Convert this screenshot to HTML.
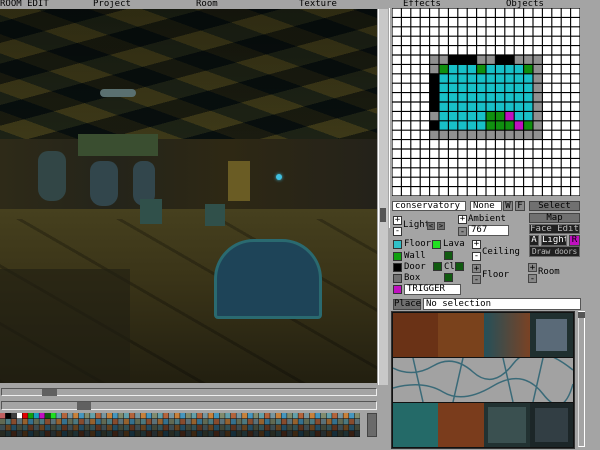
<!DOCTYPE html>
<html><head><meta charset="utf-8"><style>
*{margin:0;padding:0;box-sizing:border-box}
body{width:600px;height:450px;background:#a4a4a4;position:relative;overflow:hidden;font-family:"DejaVu Sans Mono","Liberation Mono",monospace;font-size:9px;color:#000}
.a{position:absolute}
.t{position:absolute;font-size:9px;line-height:10px;white-space:nowrap}
.box{position:absolute;background:#fff;border:1px solid #555;font-size:9px;line-height:9px;padding-left:2px;white-space:nowrap}
.btn{position:absolute;background:#707070;color:#000;font-size:9px;line-height:9px;text-align:center;border:1px solid #444;white-space:nowrap}
.dk{position:absolute;background:#202020;color:#bbb;font-size:9px;line-height:9px;text-align:center;border:1px solid #666;white-space:nowrap;overflow:hidden}
.pm{position:absolute;width:9px;height:9px;background:#fff;border:1px solid #333;font-size:9px;line-height:7px;text-align:center}
.sw{position:absolute;width:9px;height:9px;border:1px solid #333}
</style></head><body>
<div class="t" style="left:0;top:-1px">ROOM EDIT</div>
<div class="t" style="left:93px;top:-1px">Project</div>
<div class="t" style="left:196px;top:-1px">Room</div>
<div class="t" style="left:299px;top:-1px">Texture</div>
<div class="t" style="left:403px;top:-1px">Effects</div>
<div class="t" style="left:506px;top:-1px">Objects</div>

<!-- 3D view -->
<div class="a" style="left:0;top:9px;width:377px;height:374px;overflow:hidden;background:#221f12">
 <div class="a" style="left:0;top:0;width:377px;height:140px;background:repeating-linear-gradient(20deg,#0c1614 0 18px,#3a3618 18px 36px)"></div>
 <div class="a" style="left:0;top:0;width:377px;height:140px;background:repeating-linear-gradient(-15deg,rgba(5,10,10,.6) 0 20px,rgba(70,65,25,.3) 20px 40px)"></div>
 <div class="a" style="left:0;top:0;width:377px;height:140px;background:linear-gradient(rgba(0,0,0,.25),rgba(0,0,0,0))"></div>
 <div class="a" style="left:0;top:130px;width:377px;height:80px;background:linear-gradient(90deg,#2e2a18,#24241a 30%,#2e2814 60%,#24221a)"></div>
 <div class="a" style="left:0;top:200px;width:377px;height:174px;background:linear-gradient(#46401e,#3a3418 40%,#221f10)"></div>
 <div class="a" style="left:0;top:210px;width:377px;height:164px;background:repeating-linear-gradient(30deg,rgba(0,0,0,.25) 0 3px,transparent 3px 50px)"></div>
 <div class="a" style="left:0;top:260px;width:130px;height:114px;background:#201e12;opacity:.6"></div>
 <div class="a" style="left:38px;top:142px;width:28px;height:50px;background:#324646;border-radius:10px 10px 12px 12px"></div>
 <div class="a" style="left:90px;top:152px;width:28px;height:45px;background:#32464c;border-radius:10px 10px 12px 12px"></div>
 <div class="a" style="left:133px;top:152px;width:22px;height:45px;background:#32464c;border-radius:10px 10px 12px 12px"></div>
 <div class="a" style="left:78px;top:125px;width:80px;height:22px;background:#3a4e30"></div>
 <div class="a" style="left:100px;top:80px;width:36px;height:8px;background:#5a7070;border-radius:4px"></div>
 <div class="a" style="left:228px;top:152px;width:22px;height:40px;background:#6a5c24"></div>
 <div class="a" style="left:276px;top:165px;width:6px;height:6px;background:#40c0e0;border-radius:3px;box-shadow:0 0 3px #40c0e0"></div>
 <div class="a" style="left:214px;top:230px;width:108px;height:80px;background:#1e4458;border-radius:40px 40px 4px 4px;border:3px solid #2a6a70"></div>
 <div class="a" style="left:205px;top:195px;width:20px;height:22px;background:#30504a"></div>
 <div class="a" style="left:140px;top:190px;width:22px;height:25px;background:#30504a"></div>
</div>
<div class="a" style="left:378px;top:9px;width:10px;height:376px;background:#c8c8c8;border-left:1px solid #fff"></div>
<div class="a" style="left:380px;top:208px;width:6px;height:14px;background:#555"></div>

<div class="a" style="left:1px;top:388px;width:376px;height:8px;border:1px solid #555;border-bottom-color:#eee;border-right-color:#eee"></div>
<div class="a" style="left:42px;top:389px;width:15px;height:7px;background:#606060"></div>
<div class="a" style="left:1px;top:401px;width:376px;height:9px;border:1px solid #555;border-bottom-color:#eee;border-right-color:#eee"></div>
<div class="a" style="left:77px;top:402px;width:14px;height:8px;background:#606060"></div>
<svg class="a" style="left:0;top:413px" width="360" height="24" id="pal"></svg>
<div class="a" style="left:367px;top:413px;width:10px;height:24px;background:#6a6a6a;border:1px solid #444"></div>

<svg class="a" style="left:392px;top:8px" width="188" height="188" viewBox="0 0 20 20" id="grid"></svg>
<div class="a" style="left:389px;top:8px;width:1px;height:220px;background:#fff"></div>

<div class="box" style="left:392px;top:201px;width:74px;height:10px">conservatory</div>
<div class="box" style="left:470px;top:201px;width:32px;height:10px">None</div>
<div class="btn" style="left:503px;top:201px;width:10px;height:10px;background:#888">W</div>
<div class="btn" style="left:515px;top:201px;width:10px;height:10px;background:#888">F</div>
<div class="btn" style="left:529px;top:201px;width:51px;height:10px">Select</div>
<div class="btn" style="left:529px;top:213px;width:51px;height:10px">Map</div>
<div class="dk" style="left:529px;top:224px;width:51px;height:10px">Face Edit</div>
<div class="dk" style="left:529px;top:235px;width:10px;height:11px;color:#fff">A</div>
<div class="dk" style="left:541px;top:235px;width:26px;height:11px;color:#fff">Light</div>
<div class="a" style="left:569px;top:235px;width:11px;height:11px;background:#c010c0;border:1px solid #444;font-size:9px;text-align:center;line-height:9px">R</div>
<div class="dk" style="left:529px;top:246px;width:51px;height:11px;font-size:8px;letter-spacing:-0.3px">Draw doors</div>

<div class="pm" style="left:393px;top:216px">+</div>
<div class="pm" style="left:393px;top:227px">-</div>
<div class="t" style="left:403px;top:220px">Light</div>
<div class="btn" style="left:427px;top:222px;width:8px;height:8px;font-size:7px;line-height:6px">&lt;</div>
<div class="btn" style="left:437px;top:222px;width:8px;height:8px;font-size:7px;line-height:6px">&gt;</div>
<div class="pm" style="left:458px;top:215px">+</div>
<div class="t" style="left:468px;top:214px">Ambient</div>
<div class="btn" style="left:458px;top:227px;width:9px;height:9px;background:#888">-</div>
<div class="box" style="left:468px;top:225px;width:41px;height:11px">767</div>

<div class="sw" style="left:393px;top:240px;background:#30c0c8"></div><div class="t" style="left:404px;top:239px">Floor</div>
<div class="sw" style="left:393px;top:252px;background:#10a010"></div><div class="t" style="left:404px;top:251px">Wall</div>
<div class="sw" style="left:393px;top:263px;background:#000"></div><div class="t" style="left:404px;top:262px">Door</div>
<div class="sw" style="left:393px;top:274px;background:#707070"></div><div class="t" style="left:404px;top:273px">Box</div>
<div class="sw" style="left:393px;top:285px;background:#c010c0"></div>
<div class="box" style="left:404px;top:284px;width:57px;height:11px">TRIGGER</div>
<div class="sw" style="left:432px;top:240px;background:#20e020"></div><div class="t" style="left:443px;top:239px">Lava</div>
<div class="sw" style="left:444px;top:251px;background:#105a10"></div>
<div class="sw" style="left:433px;top:262px;background:#105a10"></div><div class="t" style="left:444px;top:262px">Cl</div>
<div class="sw" style="left:455px;top:262px;background:#105a10"></div>
<div class="sw" style="left:444px;top:273px;background:#105a10"></div>
<div class="pm" style="left:472px;top:240px">+</div>
<div class="pm" style="left:472px;top:252px">-</div>
<div class="t" style="left:482px;top:247px">Ceiling</div>
<div class="btn" style="left:472px;top:264px;width:9px;height:9px;background:#888">+</div>
<div class="btn" style="left:472px;top:275px;width:9px;height:9px;background:#888">-</div>
<div class="t" style="left:482px;top:270px">Floor</div>
<div class="btn" style="left:528px;top:263px;width:9px;height:9px;background:#888">+</div>
<div class="btn" style="left:528px;top:274px;width:9px;height:9px;background:#888">-</div>
<div class="t" style="left:538px;top:267px">Room</div>
<div class="btn" style="left:393px;top:299px;width:28px;height:11px">Place</div>
<div class="box" style="left:423px;top:298px;width:158px;height:12px;line-height:10px">No selection</div>

<div class="a" style="left:391px;top:311px;width:184px;height:138px;background:#111;border:1px solid #333"></div>
<div class="a" style="left:393px;top:313px;width:45px;height:44px;background:#6a3216"></div>
<div class="a" style="left:438px;top:313px;width:46px;height:44px;background:#7a421c"></div>
<div class="a" style="left:484px;top:313px;width:46px;height:44px;background:linear-gradient(90deg,#24505a,#7a4224)"></div>
<div class="a" style="left:530px;top:313px;width:43px;height:44px;background:#5a6a78;border:6px solid #203030"></div>
<div class="a" style="left:393px;top:358px;width:180px;height:44px;background:#a2a2a2"></div>
<svg class="a" style="left:393px;top:358px" width="180" height="44"><path d="M0 10 Q20 20 40 8 T80 14 T120 6 T180 12 M0 30 Q30 22 50 34 T100 28 T150 36 T180 26 M20 0 L30 44 M70 0 L60 44 M110 0 L120 44 M150 0 L140 44" stroke="#3a6a78" stroke-width="1.5" fill="none"/></svg>
<div class="a" style="left:393px;top:403px;width:45px;height:44px;background:#246a68"></div>
<div class="a" style="left:438px;top:403px;width:46px;height:44px;background:#7a3c1c"></div>
<div class="a" style="left:484px;top:403px;width:46px;height:44px;background:#3a5050;border:4px solid #223232"></div>
<div class="a" style="left:530px;top:403px;width:43px;height:44px;background:#323e44;border:5px solid #1c2628"></div>
<div class="a" style="left:578px;top:311px;width:7px;height:136px;border:1px solid #fff;border-left-color:#ddd"></div>
<div class="a" style="left:578px;top:312px;width:7px;height:6px;background:#555"></div>

<script>
var g=document.getElementById('grid'),s='';
var cells={};
for(var r=5;r<=13;r++)for(var c=4;c<=15;c++)cells[r+','+c]='#909090';
for(var r=6;r<=12;r++)for(var c=5;c<=14;c++)cells[r+','+c]='#18c0c8';
[[5,6],[5,7],[5,8],[5,11],[5,12],[7,4],[8,4],[9,4],[10,4],[12,4]].forEach(function(p){cells[p[0]+','+p[1]]='#000'});
[[6,5],[6,9],[6,14],[11,10],[11,11],[12,10],[12,11],[12,12],[12,14]].forEach(function(p){cells[p[0]+','+p[1]]='#109010'});
[[11,12],[12,13]].forEach(function(p){cells[p[0]+','+p[1]]='#c010c0'});
s+='<rect width="20" height="20" fill="#fff"/>';
for(var k in cells){var p=k.split(',');s+='<rect x="'+p[1]+'" y="'+p[0]+'" width="1" height="1" fill="'+cells[k]+'"/>';}
for(var i=0;i<=20;i++){s+='<line x1="'+i+'" y1="0" x2="'+i+'" y2="20" stroke="#000" stroke-width="0.12"/><line x1="0" y1="'+i+'" x2="20" y2="'+i+'" stroke="#000" stroke-width="0.12"/>';}
g.innerHTML=s;
var p=document.getElementById('pal'),t='';
var first=['#c06060','#000','#404040','#fff','#e00000','#10a010','#18a0c0','#c010c0','#105a10','#20e020'];
var base=[[120,150,160],[200,130,60],[70,150,190],[130,140,110],[100,160,170],[180,100,60]];
for(var r=0;r<4;r++)for(var c=0;c<64;c++){var col;
 if(r==0&&c<first.length)col=first[c];else{var b=base[(c*7+r*3)%6],f=[1,.75,.5,.3][r];col='rgb('+(b[0]*f|0)+','+(b[1]*f|0)+','+(b[2]*f|0)+')';}
 t+='<rect x="'+(c*5.63)+'" y="'+(r*6)+'" width="5.1" height="5.4" fill="'+col+'"/>';}
p.innerHTML='<rect width="360" height="24" fill="#111"/>'+t;
</script>
</body></html>
